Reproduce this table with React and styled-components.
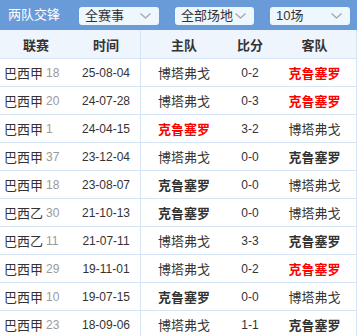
import styled, { createGlobalStyle } from "styled-components";

const GlobalStyle = createGlobalStyle`
	body {
		margin: 0;
		background: #fff;
		font-family: "Liberation Sans", "Noto Sans CJK SC", sans-serif;
		color: #333;
	}
`;

const matches = [
	{ league: "巴西甲", rank: 18, date: "25-08-04", home: "博塔弗戈", score: "0-2", away: "克鲁塞罗", hot: "away", red: true },
	{ league: "巴西甲", rank: 20, date: "24-07-28", home: "博塔弗戈", score: "0-3", away: "克鲁塞罗", hot: "away", red: true },
	{ league: "巴西甲", rank: 1, date: "24-04-15", home: "克鲁塞罗", score: "3-2", away: "博塔弗戈", hot: "home", red: true },
	{ league: "巴西甲", rank: 37, date: "23-12-04", home: "博塔弗戈", score: "0-0", away: "克鲁塞罗", hot: "away" },
	{ league: "巴西甲", rank: 18, date: "23-08-07", home: "克鲁塞罗", score: "0-0", away: "博塔弗戈", hot: "home" },
	{ league: "巴西乙", rank: 30, date: "21-10-13", home: "克鲁塞罗", score: "0-0", away: "博塔弗戈", hot: "home" },
	{ league: "巴西乙", rank: 11, date: "21-07-11", home: "博塔弗戈", score: "3-3", away: "克鲁塞罗", hot: "away" },
	{ league: "巴西甲", rank: 29, date: "19-11-01", home: "博塔弗戈", score: "0-2", away: "克鲁塞罗", hot: "away", red: true },
	{ league: "巴西甲", rank: 10, date: "19-07-15", home: "克鲁塞罗", score: "0-0", away: "博塔弗戈", hot: "home" },
	{ league: "巴西甲", rank: 23, date: "18-09-06", home: "博塔弗戈", score: "1-1", away: "克鲁塞罗", hot: "away" },
];

const Chevron = () => (
	<svg width="11" height="6" viewBox="0 0 11 6">
		<path d="M0.5 0.5 L5.5 5 L10.5 0.5" fill="none" stroke="#a9a9b3" strokeWidth="1.4" />
	</svg>
);

const Select = ({ label, width }) => (
	<SelectBox $width={width}>
		<span>{label}</span>
		<Chevron />
	</SelectBox>
);

const App = () => {
	return (
		<Container>
			<GlobalStyle />
			<TopBar>
				<Title>两队交锋</Title>
				<Select label="全赛事" width={80} />
				<Select label="全部场地" width={79} />
				<Select label="10场" width={80} />
			</TopBar>
			<HeadRow>
				<Cell>联赛</Cell>
				<Cell $divider>时间</Cell>
				<Cell>主队</Cell>
				<Cell>比分</Cell>
				<Cell $last>客队</Cell>
			</HeadRow>
			{matches.map((m, i) => (
				<Row key={i}>
					<LeagueCell>
						{m.league}
						<Rank>{m.rank}</Rank>
					</LeagueCell>
					<Cell $divider>{m.date}</Cell>
					<Cell>
						<Team $bold={m.hot === "home"} $red={m.hot === "home" && m.red}>
							{m.home}
						</Team>
					</Cell>
					<Cell>{m.score}</Cell>
					<Cell $last>
						<Team $bold={m.hot === "away"} $red={m.hot === "away" && m.red}>
							{m.away}
						</Team>
					</Cell>
				</Row>
			))}
		</Container>
	);
};

export default App;

const Container = styled.div`
	width: 357px;
	height: 336px;
	overflow: hidden;
`;

const TopBar = styled.div`
	height: 30px;
	background: #6a9bd9;
	display: flex;
	align-items: center;
	padding: 0 0 0 8px;
	box-sizing: border-box;
	gap: 16px;
`;

const Title = styled.div`
	width: 55px;
	color: #fff;
	font-size: 13px;
	line-height: 18px;
	margin-top: -1px;
`;

const SelectBox = styled.div`
	width: ${(p) => p.$width}px;
	height: 18px;
	margin-top: 1px;
	box-sizing: border-box;
	background: #eef6fe;
	border-radius: 3px;
	display: flex;
	align-items: center;
	justify-content: space-between;
	padding: 0 8px 0 6px;
	font-size: 13px;
	color: #333;
	span {
		line-height: 18px;
	}
	svg {
		display: block;
	}
`;

const GridRow = styled.div`
	display: grid;
	grid-template-columns: 72px 69px 86px 46px 84px;
	border-bottom: 1px solid #d6e5f6;
	align-items: stretch;
`;

const HeadRow = styled(GridRow)`
	height: 29px;
	box-sizing: border-box;
	background: #eef5fd;
	font-size: 13px;
	font-weight: bold;
	color: #333;
`;

const Row = styled(GridRow)`
	height: 28px;
	box-sizing: border-box;
	background: #fff;
	font-size: 12px;
	color: #333;
`;

const Cell = styled.div`
	display: flex;
	align-items: center;
	justify-content: center;
	box-sizing: border-box;
	border-right: ${(p) => (p.$divider || p.$last ? "1px solid #d6e5f6" : "none")};
`;

const LeagueCell = styled.div`
	display: flex;
	align-items: center;
	padding-left: 4px;
	font-size: 13px;
	color: #333;
`;

const Rank = styled.span`
	font-size: 12px;
	color: #9a9a9a;
	margin-left: 3px;
`;

const Team = styled.span`
	font-size: 13px;
	font-weight: ${(p) => (p.$bold ? "bold" : "normal")};
	color: ${(p) => (p.$red ? "#ff0000" : "#333")};
`;
